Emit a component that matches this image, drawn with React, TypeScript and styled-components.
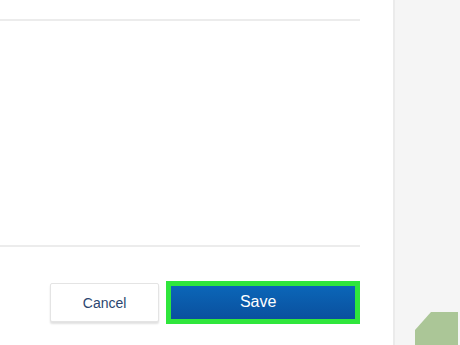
import React from 'react';
import styled, { createGlobalStyle } from 'styled-components';

const Global = createGlobalStyle`
  html, body {
    margin: 0;
    padding: 0;
    width: 460px;
    height: 345px;
    overflow: hidden;
    font-family: "Liberation Sans", Arial, sans-serif;
  }
`;

const Page = styled.div`
  display: flex;
  width: 460px;
  height: 345px;
  background: #f5f5f5;
`;

const Panel = styled.div`
  width: 395px;
  height: 100%;
  padding: 19px 33px 0 0;
  box-sizing: border-box;
  background: #fff;
  border-right: 2px solid #ebebeb;
  display: flex;
  flex-direction: column;
`;

const Rule = styled.div`
  height: 2px;
  background: #ececec;
`;

const Body = styled.div`
  height: 224px;
`;

const Footer = styled.div`
  display: flex;
  align-items: center;
  gap: 7px;
  padding: 34px 0 0 50px;
`;

const Cancel = styled.button`
  width: 110px;
  height: 39px;
  background: #fff;
  border: 1px solid #e4e4e4;
  border-radius: 2px;
  box-shadow: 0 2px 2px rgba(0, 0, 0, 0.12);
  font-family: "Liberation Sans", Arial, sans-serif;
  font-size: 14px;
  color: #2b4670;
  cursor: pointer;
`;

const Save = styled.button`
  width: 195px;
  height: 43px;
  box-sizing: border-box;
  padding: 0 10px 2px 0;
  border: 5px solid #2fe63c;
  background: linear-gradient(#0b66b8, #0a509e);
  font-family: "Liberation Sans", Arial, sans-serif;
  font-size: 16px;
  color: #fff;
  cursor: pointer;
`;

const Side = styled.div`
  flex: 1;
  display: flex;
  flex-direction: column;
  justify-content: flex-end;
  padding-left: 20px;
`;

const Hex = () => (
  <svg width="43" height="33" viewBox="0 0 43 33" style={{ display: 'block' }}>
    <path d="M16 0 H43 V33 H0 V18 Z" fill="#abc697" />
  </svg>
);

export default function App() {
  return (
    <>
      <Global />
      <Page>
        <Panel>
          <Rule />
          <Body />
          <Rule />
          <Footer>
            <Cancel>Cancel</Cancel>
            <Save>Save</Save>
          </Footer>
        </Panel>
        <Side>
          <Hex />
        </Side>
      </Page>
    </>
  );
}
